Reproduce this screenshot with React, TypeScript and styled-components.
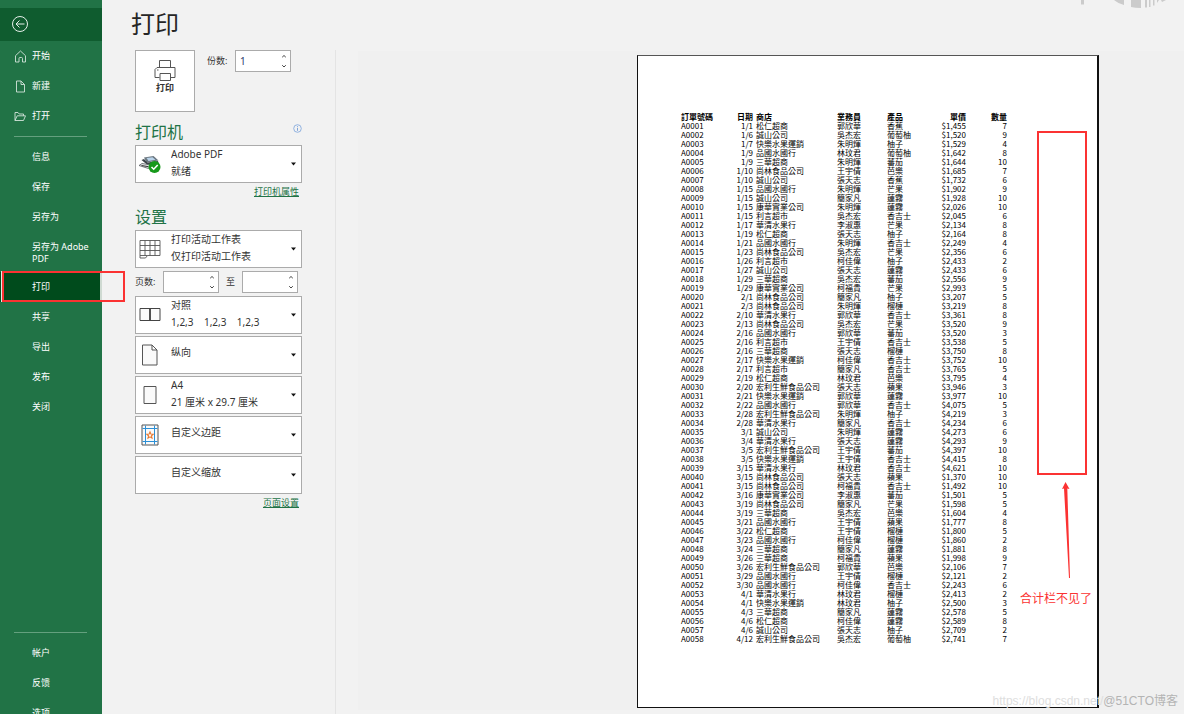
import React from "react";
import styled, { createGlobalStyle } from "styled-components";

const UI_FONT = `"Noto Sans", "Noto Sans CJK SC", sans-serif`;
const CJK_FONT = `"Noto Sans CJK SC", "Noto Sans", sans-serif`;
const SHEET_FONT = `"Noto Sans CJK TC", "Noto Sans", sans-serif`;
const RED = "#fb3232";
const GREEN = "#217346";

const GlobalStyle = createGlobalStyle`
  * { box-sizing: border-box; }
  body { margin: 0; background: #f2f2f2; font-family: ${UI_FONT}; color: #333; }
  button, input, select { font: inherit; color: inherit; }
`;

const Shell = styled.div`
  display: flex;
  height: 100vh;
  overflow: hidden;
`;

/* ---------- sidebar ---------- */

const Sidebar = styled.nav`
  flex: 0 0 102px;
  display: flex;
  flex-direction: column;
  min-height: 728px;
  padding-top: 8px;
  background: ${GREEN};
  color: #fff;
`;

const BackButton = styled.button`
  display: flex;
  align-items: center;
  height: 33px;
  padding: 0 0 2px 11px;
  border: 0;
  background: #0f5c2f;
  color: #e6f0ea;
`;

const NavItem = styled.button<{ $active?: boolean; $tall?: boolean }>`
  position: relative;
  display: flex;
  align-items: ${(p) => (p.$tall ? "flex-start" : "center")};
  height: ${(p) => (p.$tall ? 40 : 30)}px;
  padding: ${(p) => (p.$tall ? "9px 8px 0 14px" : "0 8px 0 14px")};
  border: 0;
  border-right: ${(p) => (p.$active ? "2px solid #cfdad2" : "0")};
  background: ${(p) => (p.$active ? "#004b1c" : "transparent")};
  font-size: 9px;
  line-height: 12px;
  text-align: left;
`;

const NavIcon = styled.span`
  display: flex;
  flex: 0 0 18px;
  color: #d3e3da;
`;

const NavRule = styled.hr`
  width: 73px;
  height: 1px;
  margin: 5px 0 5px 14px;
  border: 0;
  background: #64a07e;
`;

const NavFooter = styled.div`
  display: flex;
  flex-direction: column;
  margin-top: auto;
`;

const ActiveMark = styled.span`
  position: absolute;
  z-index: 2;
  left: 2px;
  top: -1px;
  width: 123px;
  height: 31px;
  border: 2px solid ${RED};
  box-shadow: -1px 0 0 #dfeee5;
`;

/* ---------- settings ---------- */

const Settings = styled.main`
  flex: 0 0 233px;
  padding: 0 33px;
`;

const Title = styled.h1`
  margin: 0 0 0 -4px;
  height: 50px;
  padding-top: 5px;
  font: 400 24px/36px ${CJK_FONT};
  color: #262626;
`;

const PrintRow = styled.div`
  display: flex;
  align-items: flex-start;
`;

const PrintButton = styled.button`
  display: flex;
  flex-direction: column;
  align-items: center;
  width: 60px;
  height: 62px;
  padding: 8px 0 0;
  border: 1px solid #ababab;
  background: #fff;
  font-size: 9px;
  font-weight: 700;
  line-height: 14px;
`;

const FieldLabel = styled.label<{ $width: number }>`
  width: ${(p) => p.$width}px;
  font-size: 9px;
  line-height: 21px;
`;

const CopiesLabel = styled(FieldLabel)`
  margin-left: 12px;
`;

const Spinner = styled.span`
  display: flex;
  align-items: center;
  width: 56px;
  height: 22px;
  padding: 0 3px 0 4px;
  border: 1px solid #ababab;
  background: #fff;
`;

const SpinInput = styled.input`
  flex: 1;
  min-width: 0;
  padding: 0;
  border: 0;
  outline: 0;
  background: transparent;
  font-size: 10px;
  color: #2b3a6b;
`;

const Heading = styled.h2`
  display: flex;
  justify-content: space-between;
  margin: 0;
  font: 400 16px/24px ${CJK_FONT};
  color: ${GREEN};
`;

const PrinterHeading = styled(Heading)`
  margin-top: 7px;
  padding-bottom: 2px;
`;

const SettingsHeading = styled(Heading)`
  margin-top: 6px;
  padding-bottom: 2px;
`;

const InfoIcon = styled.svg`
  margin-top: 5px;
`;

const Stack = styled.div`
  display: flex;
  flex-direction: column;
  gap: 2px;
`;

const Choice = styled.label`
  display: flex;
  align-items: center;
  height: 38px;
  padding-right: 4px;
  border: 1px solid #ababab;
  background: #fff;
  font-size: 10px;
  line-height: 17px;
`;

const ChoiceIcon = styled.span`
  display: flex;
  justify-content: center;
  flex: 0 0 27px;
`;

const ChoiceText = styled.span<{ $single: boolean }>`
  display: flex;
  flex: 1;
  flex-direction: column;
  min-width: 0;
  padding: 0 0 ${(p) => (p.$single ? 5 : 2)}px 8px;
`;

const ChoiceSelect = styled.select`
  appearance: none;
  height: 17px;
  padding: 0;
  border: 0;
  outline: 0;
  background: transparent;
`;

const Detail = styled.span`
  white-space: pre;
`;

const LinkRow = styled.div`
  display: flex;
  justify-content: flex-end;
  padding: 2px 3px 0 0;
`;

const TextLink = styled.a`
  font-size: 9px;
  line-height: 13px;
  color: ${GREEN};
`;

const PagesRow = styled.div`
  display: flex;
  margin: 1px 0;
`;

const ToLabel = styled(FieldLabel)`
  text-align: center;
`;

/* ---------- preview ---------- */

const Preview = styled.section`
  position: relative;
  display: flex;
  flex: 1;
  flex-direction: column;
  padding-top: 51px;
`;

const PreviewArea = styled.div`
  display: flex;
  flex: 1;
  justify-content: flex-end;
  align-items: flex-start;
  margin: 0 0 4px 22px;
  padding: 4px 85px 0 0;
  background: #f0f0f0;
`;

const Divider = styled.div`
  flex: 0 0 1px;
  margin-top: 50px;
  background: #e4e4e4;
`;

const Paper = styled.article`
  position: relative;
  width: 462px;
  height: 653px;
  padding: 56px 0 0 43px;
  border: 1px solid #111;
  border-right-width: 2px;
  border-top-color: #555;
  background: #fff;
`;

const Sheet = styled.table`
  width: 326px;
  table-layout: fixed;
  border-collapse: collapse;
  font: 400 8px/9px ${SHEET_FONT};
  color: #000;
  white-space: nowrap;
`;

const Cell = styled.td<{ $right?: boolean; $pad?: boolean }>`
  height: 9px;
  padding: 0 0 0 ${(p) => (p.$pad ? 3 : 0)}px;
  text-align: ${(p) => (p.$right ? "right" : "left")};
`;

const MissingBox = styled.div`
  position: absolute;
  left: 399px;
  top: 75px;
  width: 50px;
  height: 344px;
  border: 2px solid ${RED};
`;

const Arrow = styled.svg`
  position: absolute;
  left: 420px;
  top: 425px;
`;

const Note = styled.p`
  position: absolute;
  left: 382px;
  top: 533px;
  margin: 0;
  font: 400 12px/18px ${CJK_FONT};
  color: ${RED};
  white-space: nowrap;
`;

const CornerArt = styled.svg`
  position: absolute;
  right: 0;
  top: 0;
`;

const Watermark = styled.div`
  position: absolute;
  right: 6px;
  bottom: 4px;
  display: flex;
  font: 12px/18px "Liberation Sans", "Noto Sans CJK SC", sans-serif;
  color: #b4b4b4;
`;

const FaintUrl = styled.span`
  color: #dedede;
`;

/* ---------- icons ---------- */

const BackIcon = () => (
  <svg width="18" height="18" viewBox="0 0 18 18" fill="none" stroke="currentColor">
    <circle cx="9" cy="9" r="7.5" />
    <path d="M13.500 9H5M8.500 5.500L5 9l3.500 3.500" />
  </svg>
);

const HomeIcon = () => (
  <svg width="12" height="13" viewBox="0 0 12 13" fill="none" stroke="currentColor" strokeWidth="0.9">
    <path d="M1.500 5.700L6.500 1l5 4.700V12H8.500V8.500q0-1-1-1h-1.500q-1 0-1 1V12H1.500z" />
  </svg>
);

const NewIcon = () => (
  <svg width="12" height="13" viewBox="0 0 12 13" fill="none" stroke="currentColor" strokeWidth="0.9">
    <path d="M2.500 1h4.500L10.500 4.500V12H2.500zM7 1v3.500H10.500" />
  </svg>
);

const OpenIcon = () => (
  <svg width="12" height="13" viewBox="0 0 12 13" fill="none" stroke="currentColor" strokeWidth="0.9">
    <path d="M1 10.500V2.500h3L5.200 4H9.500v1.800M1 10.500L3.200 5.800h8.300L9.500 10.500z" />
  </svg>
);

const PrinterIcon = () => (
  <svg width="22" height="22" viewBox="0 0 22 22" fill="none" stroke="#555">
    <path d="M5.500 8.500v-7h11v7M5.500 18.500H1V10.500l2-2H21V18.500h-4.500" />
    <path d="M6 14.500h10.500v7H6z" />
    <path d="M3 11h1.500" />
  </svg>
);

const Chevrons = () => (
  <svg width="6" height="18" viewBox="0 0 6 18" fill="none" stroke="#444">
    <path d="M1.200 5.200L3 3.500l1.800 1.700M1.200 13.200L3 15l1.800-1.800" />
  </svg>
);

const Caret = () => (
  <svg width="7" height="4" viewBox="0 0 7 4">
    <path d="M1 0.500h5L3.500 3.500z" fill="#111" />
  </svg>
);

const PdfPrinterIcon = () => (
  <svg width="24" height="20" viewBox="0 0 24 20">
    <path d="M6 3.500l9.500-1.500 5 4.500-12 2z" fill="#6b7780" />
    <path d="M8.500 4l6-.8 3 2.600-7 1.200z" fill="#b9d3ea" />
    <path d="M3.500 6l2.500-1 3.500 3.500 10.500-1.500.5 2-11 2z" fill="#3d444a" />
    <path d="M1 11.500l3-2 9 1.500-2.500 3.500z" fill="#e6e8ea" stroke="#555b60" strokeWidth="0.8" />
    <path d="M3.500 11.500l7 1.200" stroke="#333" />
    <circle cx="16.500" cy="13" r="6" fill="#17991b" />
    <path d="M13.500 13l2.200 2.200 4-4.200" fill="none" stroke="#fff" strokeWidth="1.600" />
  </svg>
);

const GridIcon = () => (
  <svg width="22" height="20" viewBox="0 0 22 20" fill="#fff" stroke="#555" strokeWidth="0.9">
    <path d="M1 1.500h20v15H8.500L6.500 19H1z" />
    <path d="M1 6.500h20M1 11.500h20M1 16.500h7.500M6 1.500v15M11 1.500v15M16 1.500v15" />
  </svg>
);

const CollateIcon = () => (
  <svg width="22" height="14" viewBox="0 0 22 14" fill="#fafafa" stroke="#444">
    <path d="M1 .5h10v12H1zM11 .5h10v12H11z" />
    <path d="M11 .5v12" strokeWidth="1.500" />
  </svg>
);

const PortraitIcon = () => (
  <svg width="18" height="22" viewBox="0 0 18 22" fill="#fafafa" stroke="#555">
    <path d="M1.500 1h9.500l5 5v15H1.500zM11 1v5h5" />
  </svg>
);

const PaperIcon = () => (
  <svg width="14" height="20" viewBox="0 0 14 20" fill="#fafafa" stroke="#555">
    <path d="M1 1.500h12v17H1z" />
  </svg>
);

const MarginsIcon = () => (
  <svg width="18" height="22" viewBox="0 0 18 22" fill="none">
    <path d="M1 1h16v20H1z" fill="#fafafa" stroke="#555" />
    <path d="M4.500 1.500v19M13.500 1.500v19M1.500 4.500h15M1.500 17.500h15" stroke="#2b8fd6" />
    <path d="M9 8l.9 2.100 2.300.2-1.700 1.500.5 2.300L9 12.900l-2 1.200.5-2.300-1.700-1.500 2.300-.2z" stroke="#e8762c" strokeWidth="1.100" />
  </svg>
);

/* ---------- data ---------- */

const shops: Record<string, string> = {
  s: "松仁超商", c: "誠山公司", k: "快樂水果運銷", p: "品國水國行", t: "三華超商",
  n: "尚林食品公司", g: "康華實業公司", l: "利言超市", h: "華清水果行", z: "宏利生鮮食品公司",
};
const reps: Record<string, string> = {
  g: "郭欣華", w: "吳杰宏", z: "朱明煇", l: "林玟君", y: "王宇倩", t: "張天志",
  j: "簡家凡", s: "李淑惠", k: "柯佳偉", f: "柯福貴",
};
const goods: Record<string, string> = {
  x: "香蕉", p: "葡萄柚", y: "柚子", f: "蕃茄", b: "芭樂", m: "芒果", l: "蓮霧", j: "香吉士", d: "榴槤", a: "蘋果",
};

const orders = `1/1 s g x 1,455 7
1/6 c w p 1,520 9
1/7 k z y 1,529 4
1/9 p l p 1,642 8
1/9 t z f 1,644 10
1/10 n y b 1,685 7
1/10 c t x 1,732 6
1/15 p z m 1,902 9
1/15 c j l 1,928 10
1/15 g z l 2,026 10
1/15 l w j 2,045 6
1/17 h s m 2,134 8
1/19 s t y 2,164 8
1/21 p z j 2,249 4
1/23 n w m 2,356 6
1/26 l k y 2,433 2
1/27 c t l 2,433 6
1/29 t w f 2,556 9
1/29 g f m 2,993 5
2/1 n j y 3,207 5
2/3 n z d 3,219 8
2/10 h g j 3,361 8
2/13 n w m 3,520 9
2/16 p g f 3,520 3
2/16 l y j 3,538 5
2/16 t t d 3,750 8
2/17 k k j 3,752 10
2/17 l j j 3,765 5
2/19 s l b 3,795 4
2/20 z t a 3,946 3
2/21 k g l 3,977 10
2/22 p g j 4,075 5
2/28 z z y 4,219 3
2/28 h j j 4,234 6
3/1 c z l 4,273 6
3/4 h t l 4,293 9
3/5 z y f 4,397 10
3/5 k y j 4,415 8
3/15 h l j 4,621 10
3/15 n t a 1,370 10
3/15 n f j 1,492 10
3/16 g s f 1,501 5
3/19 n j m 1,598 5
3/19 t w b 1,604 4
3/21 p y a 1,777 8
3/22 s y d 1,800 5
3/23 p k d 1,860 2
3/24 t j l 1,881 8
3/26 t f a 1,998 9
3/26 z g b 2,106 7
3/29 p y d 2,121 2
3/30 p k j 2,243 6
4/1 h l d 2,413 2
4/1 k l y 2,500 3
4/3 t j l 2,578 5
4/6 s k l 2,589 8
4/6 c t y 2,709 2
4/12 z w p 2,741 7`
  .split("\n")
  .map((line, i) => {
    const [date, shop, rep, good, price, qty] = line.split(" ");
    return {
      id: "A" + String(i + 1).padStart(4, "0"),
      date,
      shop: shops[shop],
      rep: reps[rep],
      good: goods[good],
      price: "$" + price,
      qty,
    };
  });

const columnWidths = [44, 28, 84, 50, 48, 31, 41];

/* ---------- parts ---------- */

type NavProps = { label: string; icon?: React.ReactNode; active?: boolean; tall?: boolean };

const Nav = ({ label, icon, active, tall }: NavProps) => (
  <NavItem $active={active} $tall={tall} aria-current={active ? "page" : undefined}>
    <NavIcon>{icon}</NavIcon>
    <span>{label}</span>
    {active && <ActiveMark />}
  </NavItem>
);

type PickerProps = { name: string; value: string; detail?: string; icon?: React.ReactNode };

const Picker = ({ name, value, detail, icon }: PickerProps) => (
  <Choice>
    <ChoiceIcon>{icon}</ChoiceIcon>
    <ChoiceText $single={!detail}>
      <ChoiceSelect aria-label={name}>
        <option>{value}</option>
      </ChoiceSelect>
      {detail && <Detail>{detail}</Detail>}
    </ChoiceText>
    <Caret />
  </Choice>
);

const NumberField = ({ id, value }: { id: string; value?: string }) => (
  <Spinner>
    <SpinInput id={id} defaultValue={value} inputMode="numeric" />
    <Chevrons />
  </Spinner>
);

export default function App() {
  return (
    <>
      <GlobalStyle />
      <Shell>
        <Sidebar>
          <BackButton aria-label="返回">
            <BackIcon />
          </BackButton>
          <Nav label="开始" icon={<HomeIcon />} />
          <Nav label="新建" icon={<NewIcon />} />
          <Nav label="打开" icon={<OpenIcon />} />
          <NavRule />
          <Nav label="信息" />
          <Nav label="保存" />
          <Nav label="另存为" />
          <Nav label="另存为 Adobe PDF" tall />
          <Nav label="打印" active />
          <Nav label="共享" />
          <Nav label="导出" />
          <Nav label="发布" />
          <Nav label="关闭" />
          <NavFooter>
            <NavRule />
            <Nav label="帐户" />
            <Nav label="反馈" />
            <Nav label="选项" />
          </NavFooter>
        </Sidebar>

        <Settings>
          <Title>打印</Title>
          <PrintRow>
            <PrintButton>
              <PrinterIcon />
              打印
            </PrintButton>
            <CopiesLabel $width={28} htmlFor="copies">份数:</CopiesLabel>
            <NumberField id="copies" value="1" />
          </PrintRow>

          <PrinterHeading>
            打印机
            <InfoIcon width="9" height="9" viewBox="0 0 9 9" fill="none" stroke="#7ba3dc">
              <circle cx="4.500" cy="4.500" r="3.800" strokeWidth="0.8" />
              <path d="M4.500 4v2.800M4.500 2.200v1" />
            </InfoIcon>
          </PrinterHeading>
          <Picker name="打印机" value="Adobe PDF" detail="就绪" icon={<PdfPrinterIcon />} />
          <LinkRow>
            <TextLink href="#printer">打印机属性</TextLink>
          </LinkRow>

          <SettingsHeading>设置</SettingsHeading>
          <Stack>
            <Picker name="打印范围" value="打印活动工作表" detail="仅打印活动工作表" icon={<GridIcon />} />
            <PagesRow>
              <FieldLabel $width={28} htmlFor="from">页数:</FieldLabel>
              <NumberField id="from" />
              <ToLabel $width={23} htmlFor="to">至</ToLabel>
              <NumberField id="to" />
            </PagesRow>
            <Picker name="对照" value="对照" detail="1,2,3    1,2,3    1,2,3" icon={<CollateIcon />} />
            <Picker name="方向" value="纵向" icon={<PortraitIcon />} />
            <Picker name="纸张" value="A4" detail="21 厘米 x 29.7 厘米" icon={<PaperIcon />} />
            <Picker name="边距" value="自定义边距" icon={<MarginsIcon />} />
            <Picker name="缩放" value="自定义缩放" />
          </Stack>
          <LinkRow>
            <TextLink href="#page-setup">页面设置</TextLink>
          </LinkRow>
        </Settings>

        <Divider />
        <Preview>
          <CornerArt width="120" height="10" viewBox="0 0 120 10" fill="#cbcbcb">
            <path d="M17 0h3v4.500h-3zM50 0h10v5Q54 3.500 50 0zM67 0h10v8q-6 0-10-1zM81 0h2v7.500h-2zM85 0h1.500v7H85zM89 0h1.500v5.500H89zM93 0h2l-2 3zM97 0h5l-4 2z" />
          </CornerArt>
          <PreviewArea>
            <Paper>
              <Sheet>
                <colgroup>
                  {columnWidths.map((w, i) => (
                    <col key={i} width={w} />
                  ))}
                </colgroup>
                <thead>
                  <tr>
                    <Cell as="th">訂單號碼</Cell>
                    <Cell as="th" $right>日期</Cell>
                    <Cell as="th" $pad>商店</Cell>
                    <Cell as="th">業務員</Cell>
                    <Cell as="th">產品</Cell>
                    <Cell as="th" $right>單價</Cell>
                    <Cell as="th" $right>數量</Cell>
                  </tr>
                </thead>
                <tbody>
                  {orders.map((o) => (
                    <tr key={o.id}>
                      <Cell>{o.id}</Cell>
                      <Cell $right>{o.date}</Cell>
                      <Cell $pad>{o.shop}</Cell>
                      <Cell>{o.rep}</Cell>
                      <Cell>{o.good}</Cell>
                      <Cell $right>{o.price}</Cell>
                      <Cell $right>{o.qty}</Cell>
                    </tr>
                  ))}
                </tbody>
              </Sheet>
              <MissingBox />
              <Arrow width="16" height="98" viewBox="0 0 16 98" fill={RED}>
                <path d="M7.500 1l4 7-2.200-.5L12 97h-1L6 7.500 4 8z" />
              </Arrow>
              <Note>合计栏不见了</Note>
            </Paper>
          </PreviewArea>
          <Watermark>
            <FaintUrl>https://blog.csdn.net/</FaintUrl>
            <span>@51CTO博客</span>
          </Watermark>
        </Preview>
      </Shell>
    </>
  );
}
